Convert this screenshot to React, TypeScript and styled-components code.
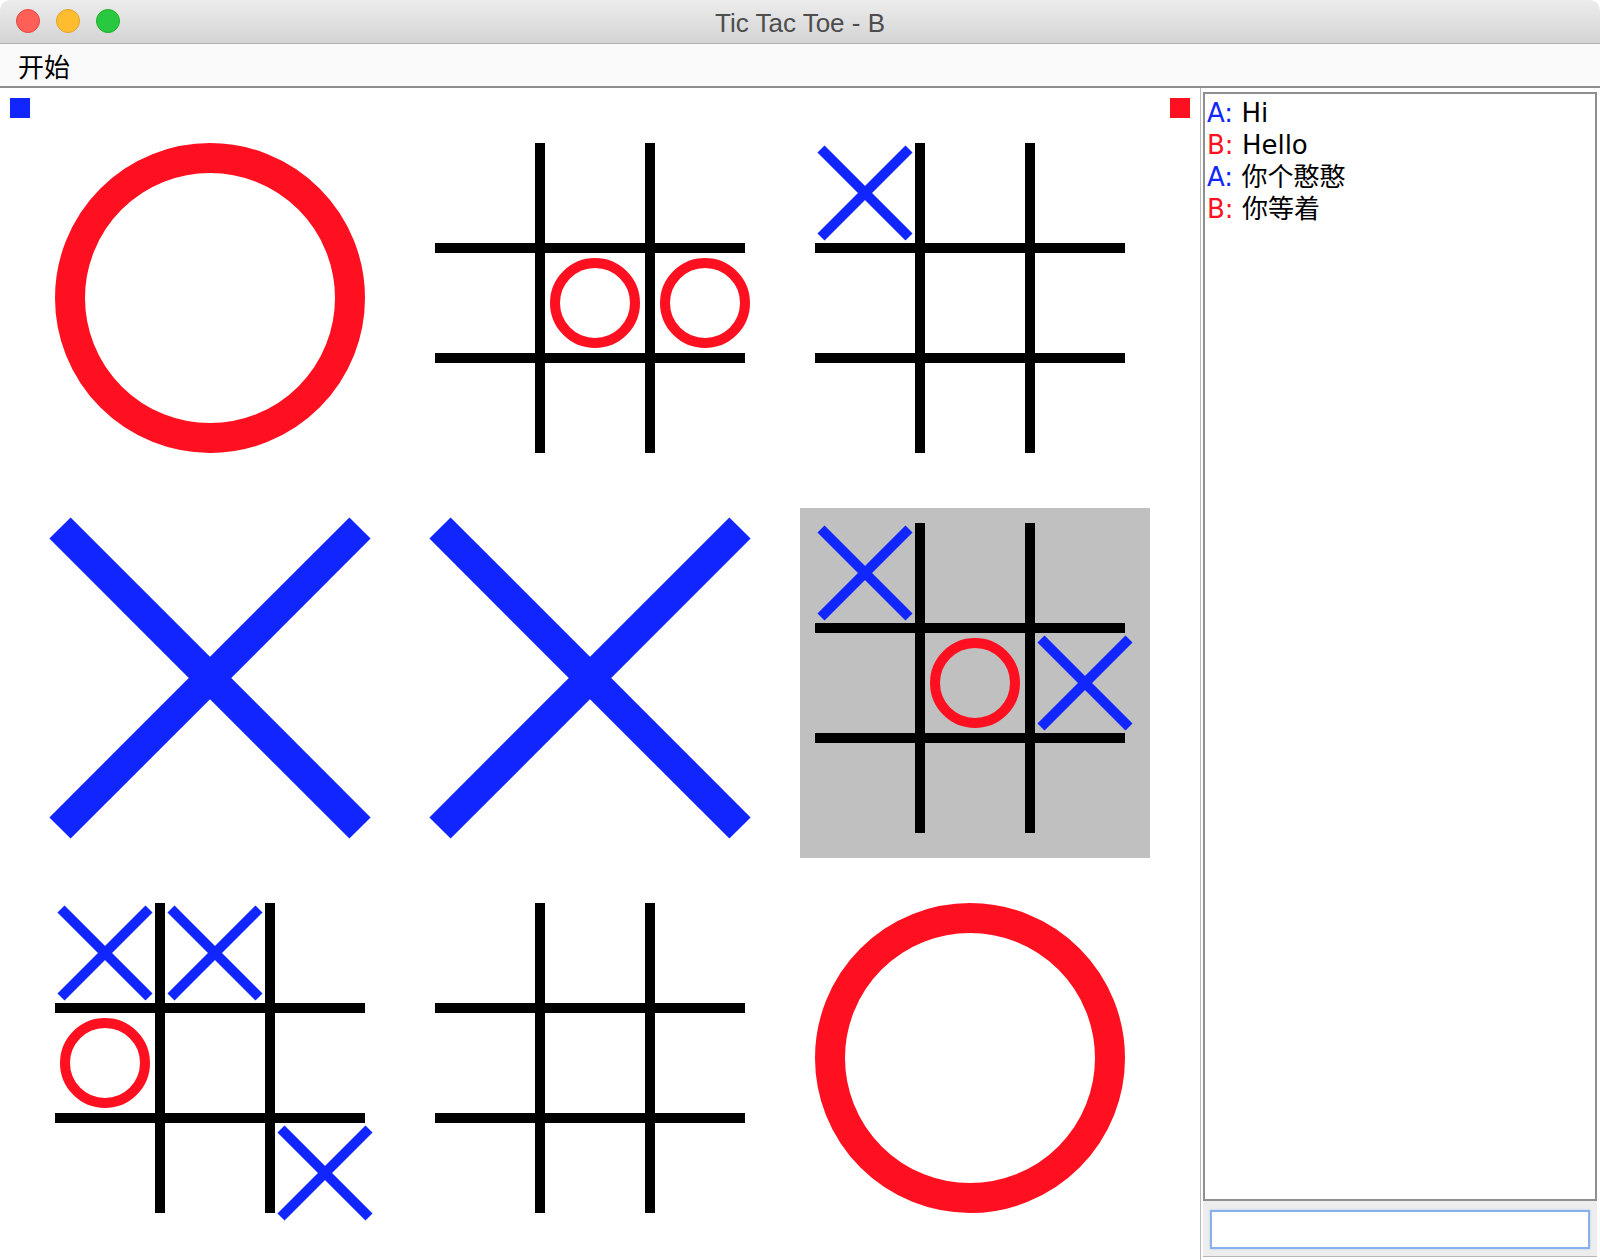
import React from "react";
import styled, { createGlobalStyle } from "styled-components";

const BLUE = "#1126ff";
const RED = "#ff1020";

const GlobalStyle = createGlobalStyle`
  html, body { margin: 0; padding: 0; background: #ffffff; }
  body { width: 1600px; height: 1260px; overflow: hidden; }
  * { box-sizing: border-box; }
`;

const Window = styled.div`
  width: 1600px;
  height: 1260px;
  display: flex;
  flex-direction: column;
  background: #ffffff;
  border-radius: 10px 10px 6px 6px;
  overflow: hidden;
`;

const TitleBar = styled.div`
  height: 44px;
  flex: none;
  display: flex;
  align-items: center;
  position: relative;
  background: linear-gradient(#ececec, #d4d4d4);
  border-bottom: 1px solid #b0b0b0;
`;

const Lights = styled.div`
  display: flex;
  gap: 16px;
  padding-left: 16px;
  padding-bottom: 1px;
`;

const Light = styled.span<{ $fill: string; $edge: string }>`
  width: 24px;
  height: 24px;
  border-radius: 50%;
  background: ${(p) => p.$fill};
  border: 1px solid ${(p) => p.$edge};
`;

const Title = styled.div`
  position: absolute;
  left: 0;
  right: 0;
  top: 0;
  height: 43px;
  padding-top: 3px;
  display: flex;
  align-items: center;
  justify-content: center;
  font-family: "Liberation Sans", Arial, sans-serif;
  font-size: 26px;
  color: #4d4d4d;
  pointer-events: none;
`;

const MenuBar = styled.div`
  height: 44px;
  flex: none;
  display: flex;
  align-items: center;
  padding-left: 18px;
  background: #fafafa;
  border-bottom: 2px solid #8e8e8e;
`;

const MenuItem = styled.span`
  font-family: "Noto Sans CJK SC", "Noto Sans", sans-serif;
  font-size: 26px;
  color: #000;
  line-height: 1;
  padding-top: 1px;
`;

const Main = styled.div`
  flex: 1;
  display: flex;
  min-height: 0;
`;

const GamePanel = styled.div`
  width: 1200px;
  flex: none;
  padding: 10px;
  display: flex;
  flex-direction: column;
  gap: 10px;
`;

const TurnRow = styled.div`
  display: flex;
  justify-content: space-between;
`;

const Indicator = styled.span<{ $color: string }>`
  width: 20px;
  height: 20px;
  background: ${(p) => p.$color};
`;

const Board = styled.div`
  margin-left: 30px;
  display: grid;
  grid-template-columns: repeat(3, 350px);
  grid-auto-rows: 350px;
  gap: 30px;
`;

const Cell = styled.div<{ $active?: boolean }>`
  padding: 15px;
  background: ${(p) => (p.$active ? "#c0c0c0" : "transparent")};
`;

const Drawing = styled.svg`
  display: block;
  width: 320px;
  height: 320px;
  overflow: visible;
`;

const ChatPanel = styled.div`
  flex: 1;
  display: flex;
  flex-direction: column;
  border-left: 1px solid #b8b8b8;
  padding: 4px 3px 3px 2px;
`;

const ChatFrame = styled.div`
  flex: 1;
  display: flex;
  flex-direction: column;
  border-bottom: 1px solid #b8b8b8;
`;

const ChatLog = styled.div`
  flex: 1;
  border: 2px solid #8f8f8f;
  background: #fff;
  padding: 3px 2px;
`;

const Line = styled.div`
  height: 32px;
  line-height: 32px;
  white-space: nowrap;
  font-family: "DejaVu Sans", "Noto Sans CJK SC", sans-serif;
  font-size: 26px;
  color: #000;
`;

const Speaker = styled.span<{ $color: string }>`
  color: ${(p) => p.$color};
`;

const InputBar = styled.div`
  background: #ededed;
  padding: 9px 7px 7px 7px;
`;

const Input = styled.input`
  display: block;
  width: 100%;
  height: 39px;
  border: 2px solid #86b1ea;
  box-shadow: 0 0 2px #a9c8f2;
  background: #fff;
  outline: none;
  font-family: "DejaVu Sans", "Noto Sans CJK SC", sans-serif;
  font-size: 22px;
`;

type Mark = "X" | "O" | null;

const SUB = [50, 160, 270];

function BigO() {
  return <circle cx={155} cy={155} r={140} fill="none" stroke={RED} strokeWidth={30} />;
}

function BigX() {
  return (
    <g stroke={BLUE} strokeWidth={30} strokeLinecap="butt">
      <line x1={5} y1={5} x2={305} y2={305} />
      <line x1={305} y1={5} x2={5} y2={305} />
    </g>
  );
}

function SmallMark({ mark, row, col }: { mark: Mark; row: number; col: number }) {
  const cx = SUB[col];
  const cy = SUB[row];
  if (mark === "O") {
    return <circle cx={cx} cy={cy} r={40} fill="none" stroke={RED} strokeWidth={10} />;
  }
  if (mark === "X") {
    const a = 44;
    return (
      <g stroke={BLUE} strokeWidth={10} strokeLinecap="butt">
        <line x1={cx - a} y1={cy - a} x2={cx + a} y2={cy + a} />
        <line x1={cx + a} y1={cy - a} x2={cx - a} y2={cy + a} />
      </g>
    );
  }
  return null;
}

function SubBoard({ marks }: { marks: Mark[][] }) {
  return (
    <>
      <g fill="#000">
        <rect x={100} y={0} width={10} height={310} />
        <rect x={210} y={0} width={10} height={310} />
        <rect x={0} y={100} width={310} height={10} />
        <rect x={0} y={210} width={310} height={10} />
      </g>
      {marks.map((r, ri) =>
        r.map((m, ci) => <SmallMark key={`${ri}-${ci}`} mark={m} row={ri} col={ci} />)
      )}
    </>
  );
}

type CellData =
  | { kind: "won"; winner: "X" | "O" }
  | { kind: "play"; marks: Mark[][]; active?: boolean };

const _ = null;

const cells: CellData[] = [
  { kind: "won", winner: "O" },
  { kind: "play", marks: [[_, _, _], [_, "O", "O"], [_, _, _]] },
  { kind: "play", marks: [["X", _, _], [_, _, _], [_, _, _]] },
  { kind: "won", winner: "X" },
  { kind: "won", winner: "X" },
  { kind: "play", active: true, marks: [["X", _, _], [_, "O", "X"], [_, _, _]] },
  { kind: "play", marks: [["X", "X", _], ["O", _, _], [_, _, "X"]] },
  { kind: "play", marks: [[_, _, _], [_, _, _], [_, _, _]] },
  { kind: "won", winner: "O" },
];

const messages = [
  { who: "A", text: "Hi" },
  { who: "B", text: "Hello" },
  { who: "A", text: "你个憨憨" },
  { who: "B", text: "你等着" },
];

export default function App() {
  return (
    <>
      <GlobalStyle />
      <Window>
        <TitleBar>
          <Lights>
            <Light $fill="#fe5f57" $edge="#e2463f" />
            <Light $fill="#febc2e" $edge="#e1a325" />
            <Light $fill="#28c840" $edge="#1dad2b" />
          </Lights>
          <Title>Tic Tac Toe - B</Title>
        </TitleBar>
        <MenuBar>
          <MenuItem>开始</MenuItem>
        </MenuBar>
        <Main>
          <GamePanel>
            <TurnRow>
              <Indicator $color={BLUE} />
              <Indicator $color={RED} />
            </TurnRow>
            <Board>
              {cells.map((c, i) => (
                <Cell key={i} $active={c.kind === "play" && !!c.active}>
                  <Drawing viewBox="0 0 320 320">
                    {c.kind === "won" ? (c.winner === "O" ? <BigO /> : <BigX />) : <SubBoard marks={c.marks} />}
                  </Drawing>
                </Cell>
              ))}
            </Board>
          </GamePanel>
          <ChatPanel>
            <ChatFrame>
              <ChatLog>
                {messages.map((m, i) => (
                  <Line key={i}>
                    <Speaker $color={m.who === "A" ? BLUE : RED}>{m.who}:</Speaker> {m.text}
                  </Line>
                ))}
              </ChatLog>
              <InputBar>
                <Input type="text" />
              </InputBar>
            </ChatFrame>
          </ChatPanel>
        </Main>
      </Window>
    </>
  );
}
